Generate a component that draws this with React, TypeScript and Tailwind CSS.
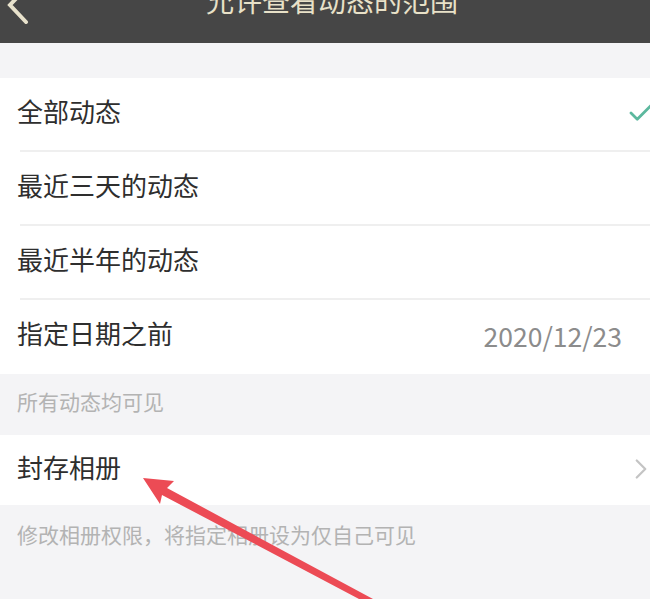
import { Check, ChevronRight } from 'lucide-react';

const rows = [
  { label: '全部动态', checked: true },
  { label: '最近三天的动态' },
  { label: '最近半年的动态' },
  { label: '指定日期之前', value: '2020/12/23' },
];

export default function App() {
  return (
    <div
      className="relative w-[650px] h-[599px] overflow-hidden bg-[#f4f4f6]"
      style={{ fontFamily: '"Noto Sans CJK SC", "Noto Sans", sans-serif' }}
    >
      <header className="relative h-[43px] bg-[#464646] overflow-hidden">
        <svg className="absolute left-[4px] top-[-14px]" width="26" height="38" viewBox="0 0 26 38">
          <path d="M22 2 L6 19 L22 36" fill="none" stroke="#e8e2cc" strokeWidth="4" strokeLinecap="round" />
        </svg>
        <h1 className="absolute left-0 right-0 top-[-20px] text-center text-[28px] leading-[40px] text-[#e8e1c8] pl-[14px]">
          允许查看动态的范围
        </h1>
      </header>

      <div className="h-[35px]" />

      <ul className="bg-white">
        {rows.map((row, i) => (
          <li key={row.label} className="relative h-[74px] flex items-center pl-[17px] pr-[28px] pb-[10px]">
            <span className="flex-1 text-[26px] text-[#2e2e2e]">{row.label}</span>
            {row.value && <span className="mt-[8px] text-[26.5px] text-[#8c8c8c]">{row.value}</span>}
            {row.checked && (
              <Check className="absolute right-[-6px] top-[20px] text-[#5cb89e]" size={30} strokeWidth={2.2} />
            )}
            {i < rows.length - 1 && (
              <div className="absolute bottom-0 left-[20px] right-0 h-[2px] bg-[#efefef]" />
            )}
          </li>
        ))}
      </ul>

      <p className="h-[61px] flex items-center pl-[17px] pb-[6px] text-[21px] text-[#b3b3b3]">所有动态均可见</p>

      <div className="bg-white h-[70px] flex items-center pl-[17px] pb-[8px] relative">
        <span className="flex-1 text-[26px] text-[#2e2e2e]">封存相册</span>
        <ChevronRight className="absolute right-[-8px] top-[17px] text-[#c4c4c4]" size={34} strokeWidth={1.6} />
      </div>

      <p className="pt-[14px] pl-[17px] text-[21px] text-[#b3b3b3]">修改相册权限，将指定相册设为仅自己可见</p>

      <svg className="absolute left-0 top-0 pointer-events-none" width="650" height="599" viewBox="0 0 650 599">
        <polygon points="143,478 174,481 167,488 373,599 359,599 162,495 160,504" fill="#ec4b55" />
      </svg>
    </div>
  );
}
